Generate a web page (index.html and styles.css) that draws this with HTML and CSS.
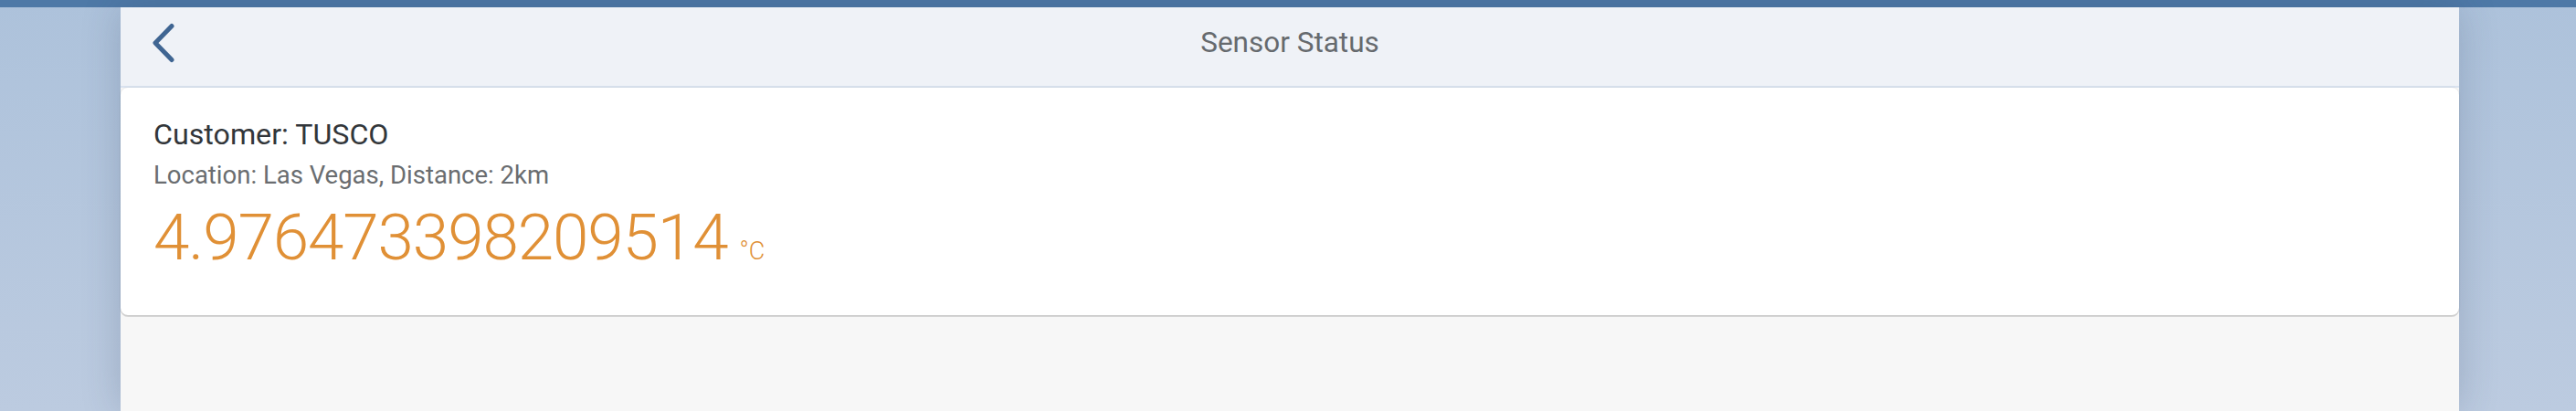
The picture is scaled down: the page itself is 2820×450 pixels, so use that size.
FILE: index.html
```html
<!DOCTYPE html>
<html lang="en">
<head>
<meta charset="utf-8">
<title>Sensor Status</title>
<link rel="stylesheet" href="styles.css">
</head>
<body>
<div class="shellbar"></div>
<div class="stage">
  <div class="app">
    <header class="header">
      <div class="header-left">
        <button class="back" aria-label="Back">
          <svg width="26" height="44" viewBox="0 0 26 44" fill="none" stroke="currentColor" stroke-width="5" stroke-linecap="round" stroke-linejoin="round"><path d="M22 3.5 L4 22 L22 40.5"/></svg>
        </button>
      </div>
      <h1 class="title">Sensor Status</h1>
      <div class="header-right"></div>
    </header>
    <section class="card">
      <div class="customer">Customer: TUSCO</div>
      <div class="location">Location: Las Vegas, Distance: 2km</div>
      <div class="reading"><span class="value">4.976473398209514</span><span class="unit">°C</span></div>
    </section>
  </div>
</div>
</body>
</html>
```

FILE: styles.css
```css
html, body {
  margin: 0;
  padding: 0;
  height: 450px;
  overflow: hidden;
}
body {
  background: linear-gradient(to bottom, #adc2db 0%, #bccbe0 100%);
  font-family: Roboto, "Liberation Sans", Arial, sans-serif;
  display: flex;
  flex-direction: column;
}
.shellbar {
  height: 8px;
  background: #4e79a7;
  flex: none;
}
.stage {
  flex: 1;
  display: flex;
  justify-content: center;
  padding-left: 4px;
}
.app {
  width: 2560px;
  background: #f7f7f7;
  box-shadow: 0 0 40px rgba(40, 60, 90, 0.22);
  display: flex;
  flex-direction: column;
}
.header {
  height: 78px;
  padding-bottom: 8px;
  background: #eff2f7;
  border-bottom: 2px solid #d9e2ef;
  display: grid;
  grid-template-columns: 1fr auto 1fr;
  align-items: center;
}
.header-left {
  display: flex;
  align-items: center;
  padding-left: 34px;
}
.back {
  border: 0;
  background: none;
  padding: 0;
  margin: 0;
  color: #3f6592;
  display: flex;
}
.title {
  margin: 0;
  font-size: 31.5px;
  font-weight: 400;
  color: #666a6e;
  line-height: 36px;
}
.card {
  background: #fff;
  border-radius: 8px;
  height: 216px;
  padding: 33px 36px 0;
  box-shadow: 0 0 2px rgba(0, 0, 0, 0.15), 0 2px 0 #d6d6d6;
}
.customer {
  font-size: 32.2px;
  line-height: 36px;
  color: #32363a;
}
.location {
  margin-top: 11px;
  font-size: 27.5px;
  line-height: 32px;
  color: #6a6d70;
}
.reading {
  margin-top: 12px;
  color: #e09036;
  display: flex;
  align-items: baseline;
}
.value {
  font-size: 71px;
  font-weight: 300;
  line-height: 80px;
  letter-spacing: -1.1px;
}
.unit {
  font-size: 27px;
  font-weight: 300;
  margin-left: 13px;
}
```
